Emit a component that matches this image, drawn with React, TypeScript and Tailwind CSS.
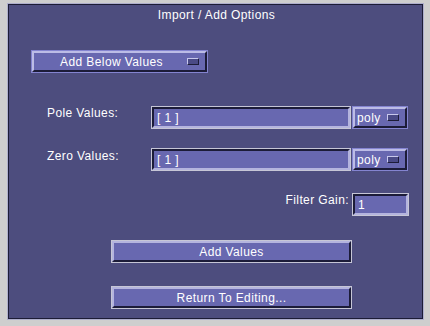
const font = { fontFamily: '"Liberation Sans", Arial, sans-serif' };

function Indicator() {
  return (
    <span className="block w-[12px] h-[7px] border border-t-[#c8c8ec] border-l-[#c8c8ec] border-b-[#1c1c38] border-r-[#1c1c38] bg-[#4a4a86]" />
  );
}

function OptionMenu({ label, className, textClass }: { label: string; className: string; textClass: string }) {
  return (
    <div className={`h-[23px] border border-[#8484d0] ${className}`}>
      <div className="h-full flex items-center border-2 border-t-[#bcbce6] border-l-[#bcbce6] border-b-[#1c1c38] border-r-[#1c1c38] bg-[#6868b0] pr-[6px]">
        <span className={`text-white text-[12px] leading-[14px] tracking-[0.4px] ${textClass}`}>{label}</span>
        <Indicator />
      </div>
    </div>
  );
}

function Field({ value, className }: { value: string; className: string }) {
  return (
    <div className={`h-[23px] border border-[#c6c6d6] ${className}`}>
      <div className="h-full flex items-center border-2 border-t-[#1c1c38] border-l-[#1c1c38] border-b-[#b4b4de] border-r-[#b4b4de] bg-[#6868b0] pl-[3px]">
        <span className="text-white text-[12px] leading-[14px] tracking-[0.4px]">{value}</span>
      </div>
    </div>
  );
}

function PushButton({ label }: { label: string }) {
  return (
    <div className="ml-[102px] w-[241px] h-[23px] border border-[#c6c6d6]">
      <div className="h-full flex items-center justify-center border-2 border-t-[#b4b4de] border-l-[#b4b4de] border-b-[#1c1c38] border-r-[#1c1c38] bg-[#6868b0]">
        <span className="text-white text-[12px] leading-[14px] tracking-[0.4px]">{label}</span>
      </div>
    </div>
  );
}

export default function App() {
  return (
    <div className="w-[430px] h-[326px] bg-[#cecece] pt-[3px] pl-[7px]" style={font}>
      <div className="w-[417px] h-[317px] border border-[#aeaecc]">
        <div className="w-full h-full border border-[#1c1c36] bg-[#4d4d7e] flex flex-col">
          <div className="mt-[3px] h-[14px] text-center text-white text-[12px] leading-[14px] tracking-[0.4px] pl-[2px]">
            Import / Add Options
          </div>

          <OptionMenu label="Add Below Values" className="mt-[28px] ml-[22px] w-[177px]" textClass="flex-1 text-center pl-[2px]" />

          <div className="mt-[33px] flex items-start">
            <span className="ml-[38px] w-[104px] text-white text-[12px] leading-[14px] tracking-[0.4px]">Pole Values:</span>
            <Field value="[ 1 ]" className="w-[200px]" />
            <OptionMenu label="poly" className="ml-[1px] w-[56px]" textClass="pl-[2px] flex-1" />
          </div>

          <div className="mt-[19px] flex items-start">
            <span className="ml-[38px] w-[104px] text-white text-[12px] leading-[14px] tracking-[0.4px] mt-[1px]">Zero Values:</span>
            <Field value="[ 1 ]" className="w-[200px]" />
            <OptionMenu label="poly" className="ml-[1px] w-[56px]" textClass="pl-[2px] flex-1" />
          </div>

          <div className="mt-[22px] flex items-start justify-end pr-[13px]">
            <span className="text-white text-[12px] leading-[14px] tracking-[0.4px] mr-[3px]">Filter Gain:</span>
            <Field value="1" className="w-[57px]" />
          </div>

          <div className="mt-[24px]">
            <PushButton label="Add Values" />
          </div>

          <div className="mt-[23px]">
            <PushButton label="Return To Editing..." />
          </div>
        </div>
      </div>
    </div>
  );
}
